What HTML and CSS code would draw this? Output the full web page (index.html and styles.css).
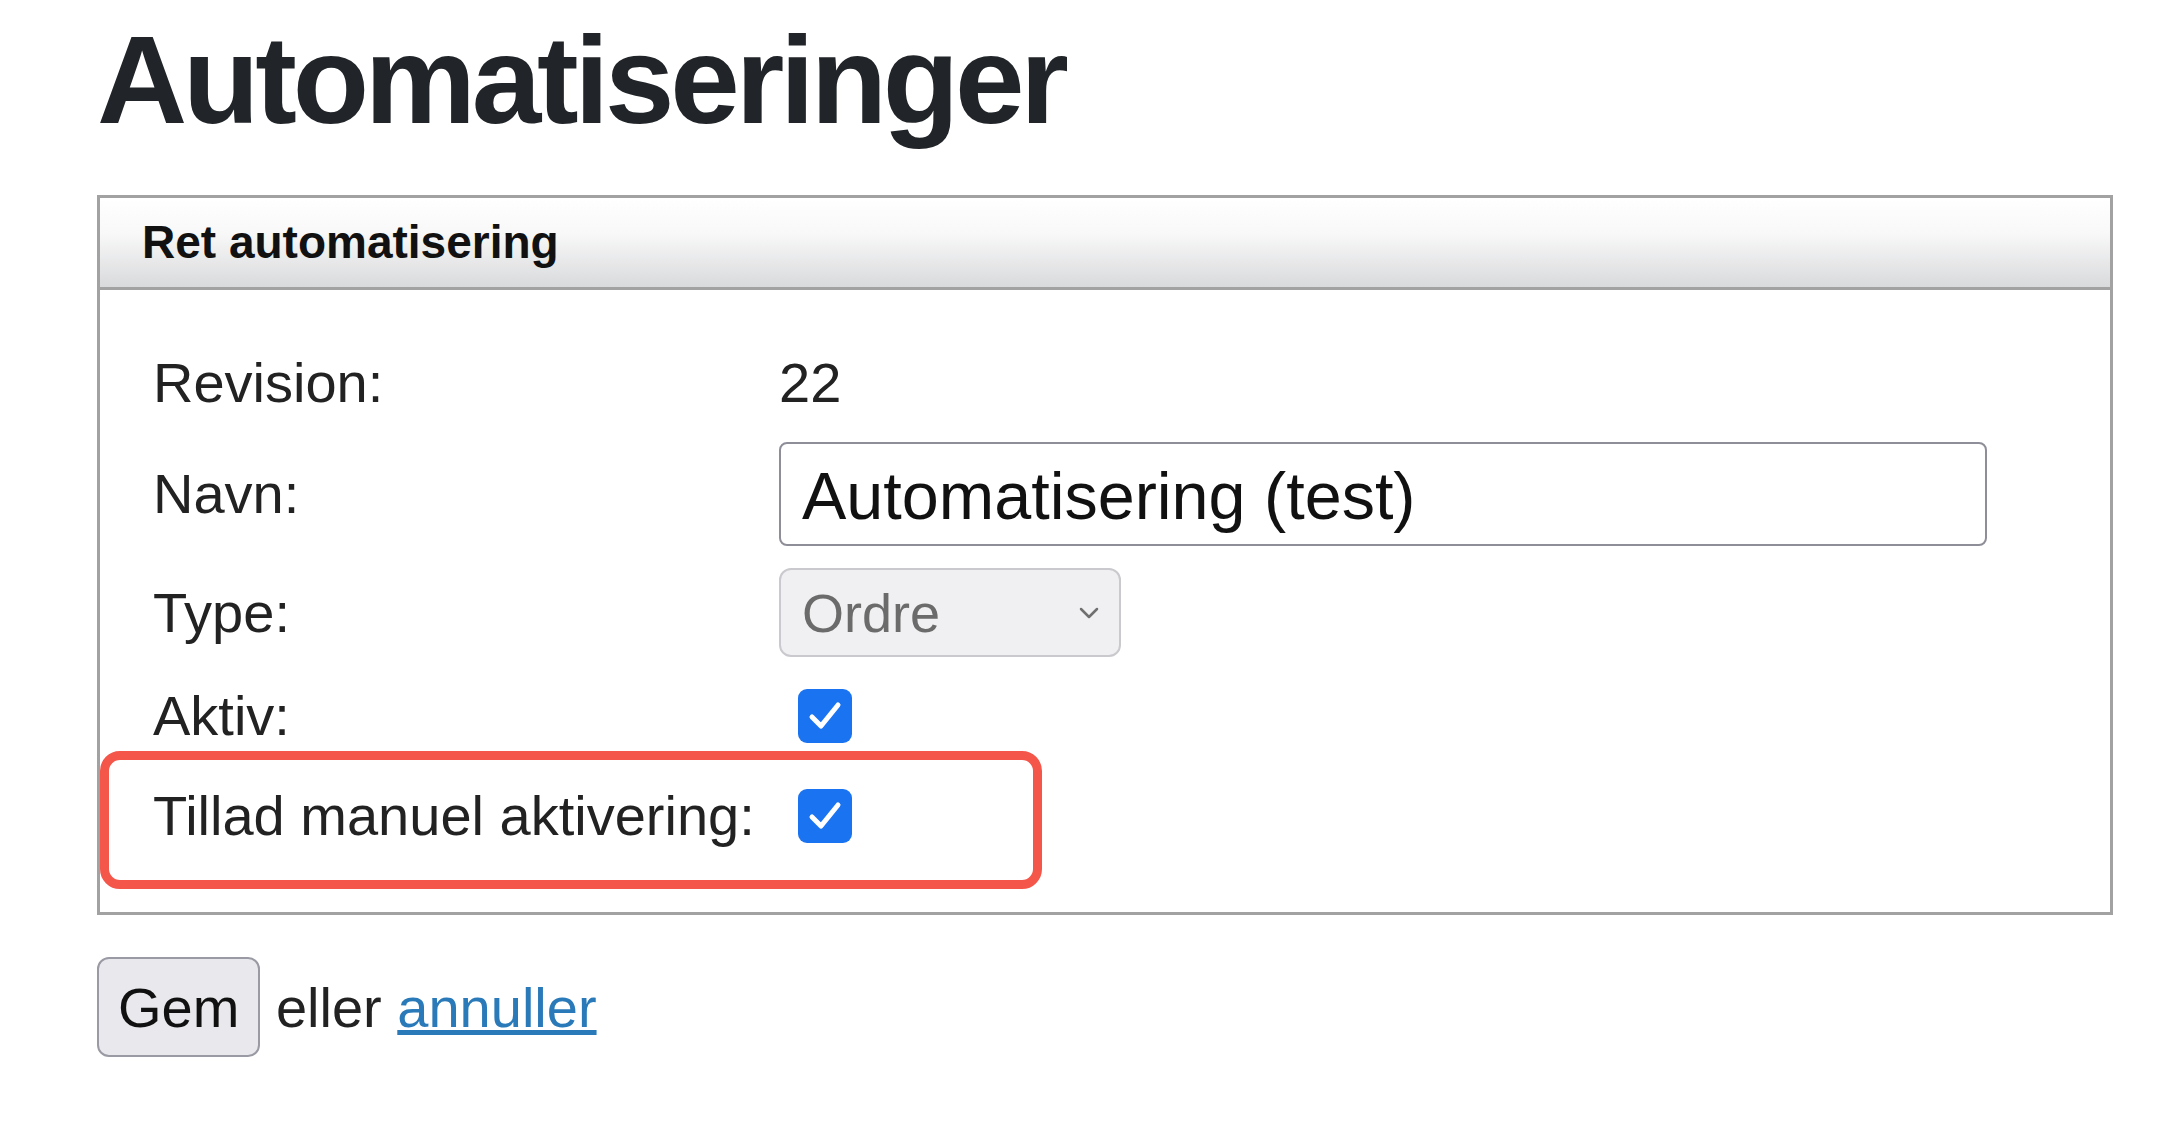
FILE: index.html
```html
<!DOCTYPE html>
<html lang="da">
<head>
    <meta charset="UTF-8">
    <title>Automatiseringer</title>
    <link rel="stylesheet" href="styles.css">
</head>
<body>

<div class="page">
    <h1>Automatiseringer</h1>

    <div class="panel">
        <div class="panel-header">Ret automatisering</div>
        <div class="panel-body">
            <table class="form-table">
                <tr>
                    <td class="label">Revision:</td>
                    <td>22</td>
                </tr>
                <tr>
                    <td class="label">Navn:</td>
                    <td><input type="text" class="text-input" value="Automatisering (test)"></td>
                </tr>
                <tr>
                    <td class="label">Type:</td>
                    <td>
                        <div class="select">
                            <span>Ordre</span>
                            <svg width="20" height="12" viewBox="0 0 20 12"><path d="M2 2 L10 10 L18 2" fill="none" stroke="#707070" stroke-width="2.5" stroke-linecap="round" stroke-linejoin="round"/></svg>
                        </div>
                    </td>
                </tr>
                <tr>
                    <td class="label">Aktiv:</td>
                    <td>
                        <span class="checkbox"><svg width="54" height="54" viewBox="0 0 54 54"><path d="M14 28 L23 37 L40 16" fill="none" stroke="#fff" stroke-width="5" stroke-linecap="round" stroke-linejoin="round"/></svg></span>
                    </td>
                </tr>
                <tr class="last-row">
                    <td class="label">Tillad manuel aktivering:</td>
                    <td>
                        <span class="checkbox"><svg width="54" height="54" viewBox="0 0 54 54"><path d="M14 28 L23 37 L40 16" fill="none" stroke="#fff" stroke-width="5" stroke-linecap="round" stroke-linejoin="round"/></svg></span>
                    </td>
                </tr>
            </table>
            <!-- annotation round the last row -->
            <div class="highlight"></div>
        </div>
    </div>

    <div class="actions">
        <button class="btn">Gem</button> eller <a href="#" class="cancel">annuller</a>
    </div>
</div>

</body>
</html>
```

FILE: styles.css
```css
body {
    margin: 0;
    background: #fff;
    font-family: "Liberation Sans", Arial, sans-serif;
    color: #222;
}
.page {
    padding: 12px 47px 0 97px;
}
h1 {
    margin: 0;
    font-size: 125px;
    line-height: 136px;
    font-weight: bold;
    letter-spacing: -4.2px;
    color: #212529;
}
.panel {
    margin-top: 47px;
    border: 3px solid #a2a2a2;
}
.panel-header {
    height: 89px;
    line-height: 89px;
    padding: 0 42px;
    font-size: 46px;
    font-weight: bold;
    color: #111;
    background: linear-gradient(#ffffff 0%, #f8f8f8 40%, #d9dadc 100%);
    border-bottom: 3px solid #a2a2a2;
}
.panel-body {
    position: relative;
    padding: 45px 44px 48px 42px;
}
.form-table {
    border-collapse: collapse;
    font-size: 56px;
    line-height: 74px;
}
.form-table td {
    padding: 11px;
    vertical-align: middle;
}
.form-table .last-row td {
    padding-top: 15px;
}
.form-table td.label {
    width: 604px;
    white-space: nowrap;
}
.text-input {
    display: block;
    box-sizing: border-box;
    width: 1208px;
    height: 104px;
    margin: 0;
    padding: 4px 21px 0;
    border: 2px solid #8e8e99;
    border-radius: 8px;
    font-family: "Liberation Sans", Arial, sans-serif;
    font-size: 66.5px;
    color: #111;
    background: #fff;
}
.select {
    display: flex;
    align-items: center;
    justify-content: space-between;
    box-sizing: border-box;
    width: 342px;
    height: 89px;
    padding: 0 20px 0 21px;
    border: 2px solid #c9c9ce;
    border-radius: 12px;
    background: #f0f0f2;
    font-size: 54px;
    color: #6b6b6b;
}
.checkbox {
    display: block;
    width: 54px;
    height: 54px;
    margin-left: 19px;
    border-radius: 9px;
    background: #1a74f2;
}
.checkbox svg {
    display: block;
}
.highlight {
    position: absolute;
    top: 461px;
    left: 0;
    width: 942px;
    height: 138px;
    box-sizing: border-box;
    border: 9px solid #f4564a;
    border-radius: 20px;
}
.actions {
    margin-top: 42px;
    font-size: 56px;
    color: #222;
}
.btn {
    height: 100px;
    padding: 0 19px;
    border: 2px solid #9a9aa4;
    border-radius: 12px;
    background: #e9e9ed;
    font-family: "Liberation Sans", Arial, sans-serif;
    font-size: 56px;
    color: #111;
    cursor: pointer;
}
.cancel {
    color: #2a7ab9;
    text-decoration: underline;
}
```
